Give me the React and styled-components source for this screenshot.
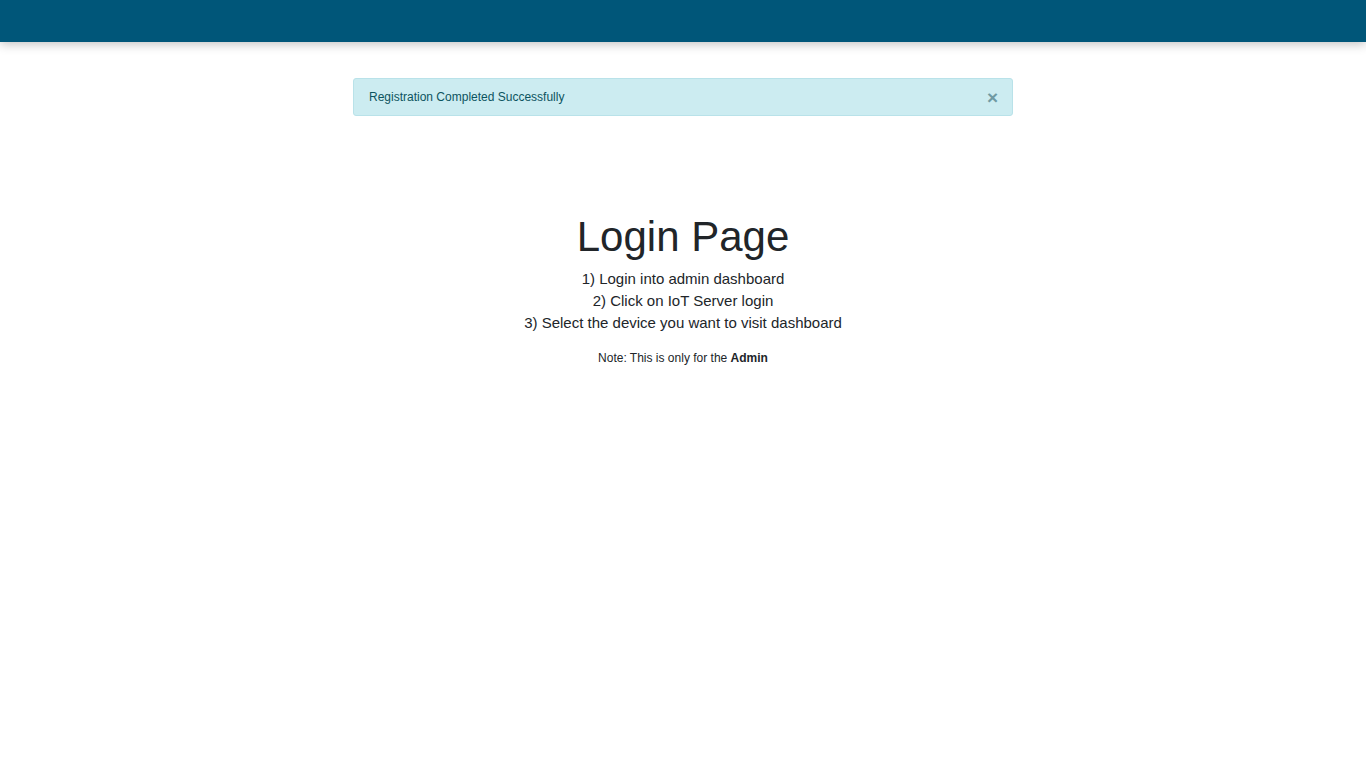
import React, { useState } from 'react'
import styled, { createGlobalStyle } from 'styled-components'

const GlobalStyle = createGlobalStyle`
  body {
    margin: 0;
    background: #fff;
    font-family: "Liberation Sans", Arial, sans-serif;
    color: #212529;
  }
`

export default function App() {
  const [open, setOpen] = useState(true)
  return (
    <>
      <GlobalStyle />
      <Navbar />
      <Main>
        <AlertBox $hidden={!open}>
          <span>Registration Completed Successfully</span>
          <Close onClick={() => setOpen(false)} aria-label="Close">×</Close>
        </AlertBox>
        <Intro>
          <Title>Login Page</Title>
          <Steps>
            <li>1) Login into admin dashboard</li>
            <li>2) Click on IoT Server login</li>
            <li>3) Select the device you want to visit dashboard</li>
          </Steps>
          <Note>Note: This is only for the <b>Admin</b></Note>
        </Intro>
      </Main>
    </>
  )
}

const Navbar = styled.nav`
  height: 42px;
  background-color: #005679;
  box-shadow: 0 2px 10px rgba(0, 0, 0, 0.25);
`

const Main = styled.main`
  width: 660px;
  margin: 36px auto 0;
`

const AlertBox = styled.div`
  display: ${p => (p.$hidden ? 'none' : 'flex')};
  align-items: center;
  justify-content: space-between;
  height: 38px;
  box-sizing: border-box;
  padding: 0 14px 0 15px;
  background-color: #ccecf1;
  border: 1px solid #b9e2e9;
  border-radius: 3px;
  color: #0c5460;
  font-size: 12px;
`

const Close = styled.button`
  border: 0;
  background: none;
  padding: 0;
  font-family: "Liberation Sans", Arial, sans-serif;
  font-size: 19px;
  font-weight: bold;
  line-height: 1;
  color: #6f9aa3;
  cursor: pointer;
`

const Intro = styled.section`
  margin-top: 96px;
  text-align: center;
`

const Title = styled.h1`
  margin: 0 0 7px;
  font-size: 42px;
  font-weight: 400;
  line-height: 49px;
  color: #212529;
`

const Steps = styled.ul`
  list-style: none;
  margin: 0;
  padding: 0;
  font-size: 15px;
  line-height: 22px;
`

const Note = styled.p`
  margin: 15px 0 0;
  font-size: 12px;
  line-height: 18px;
`
